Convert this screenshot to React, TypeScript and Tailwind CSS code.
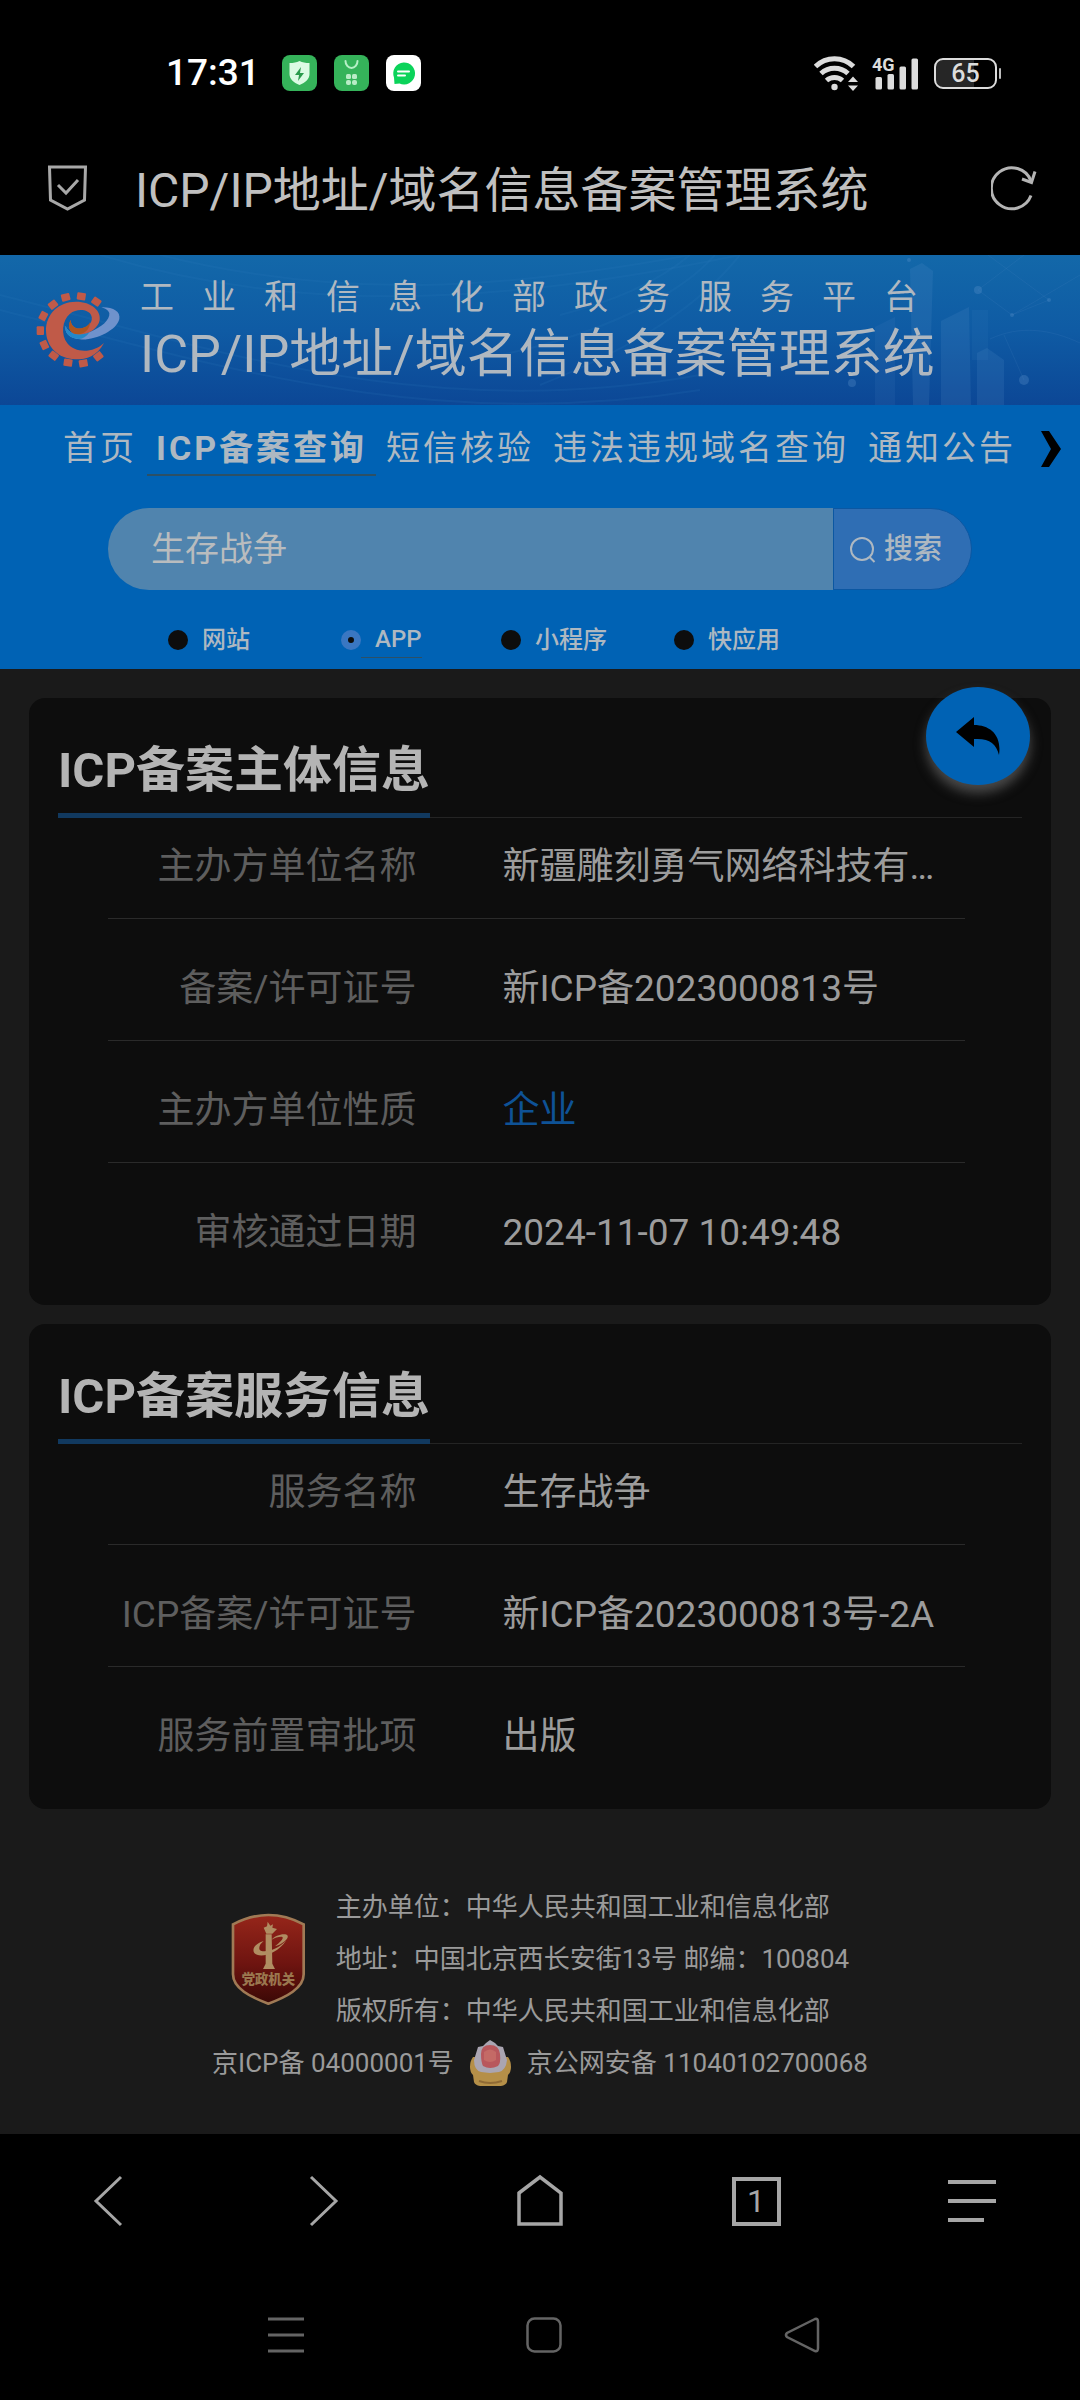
import React from 'react';

type Row = { label: string; value: string; highlight?: boolean };

const tabs = [
  { text: '首页' },
  { text: 'ICP备案查询', active: true },
  { text: '短信核验' },
  { text: '违法违规域名查询' },
  { text: '通知公告' },
];

const serviceTypes = ['网站', 'APP', '小程序', '快应用'];

const subjectRows: Row[] = [
  { label: '主办方单位名称', value: '新疆雕刻勇气网络科技有…' },
  { label: '备案/许可证号', value: '新ICP备2023000813号' },
  { label: '主办方单位性质', value: '企业', highlight: true },
  { label: '审核通过日期', value: '2024-11-07 10:49:48' },
];

const serviceRows: Row[] = [
  { label: '服务名称', value: '生存战争' },
  { label: 'ICP备案/许可证号', value: '新ICP备2023000813号-2A' },
  { label: '服务前置审批项', value: '出版' },
];

const StatusBar = () => (
  <div className="flex h-[146px] items-center justify-between pl-[166px] pr-[79px]">
    <div className="flex items-center">
      <span className="w-[116px] text-[37px] font-medium leading-[44px] text-white">17:31</span>
      <div className="flex items-center gap-[17px]">
        <svg width="35" height="36" viewBox="0 0 35 36">
          <rect width="35" height="36" rx="8" fill="#35b35a" />
          <path d="M17.500 6c3 1.500 6 2 10 2v11c0 5-4 8.500-10 11-6-2.500-10-6-10-11V8c4 0 7-.5 10-2z" fill="#dcfbe4" />
          <path d="M19 12l-6 8h4l-1 6 6-8h-4z" fill="#2a9a4c" />
        </svg>
        <svg width="35" height="36" viewBox="0 0 35 36">
          <rect width="35" height="36" rx="8" fill="#35b35a" />
          <path d="M11.500 6a6 7 0 0012 0" fill="none" stroke="#b6f0c6" strokeWidth="2" strokeLinecap="round" />
          <g fill="#b9ecc6">
            <rect x="12" y="19" width="5" height="5" rx="1.500" />
            <rect x="18" y="19" width="5" height="5" rx="1.500" />
            <rect x="12" y="25" width="5" height="5" rx="2" />
            <rect x="18" y="25" width="5" height="5" rx="2" />
          </g>
        </svg>
        <svg width="35" height="36" viewBox="0 0 35 36">
          <rect width="35" height="36" rx="8" fill="#fff" />
          <path d="M17.500 7.500a11 11 0 11-4 21l-5 .500-.5-6.500A11 11 0 0117.500 7.500z" fill="#0bd35a" />
          <path d="M12 16.500h11M12 20.500h7" stroke="#fff" strokeWidth="2" strokeLinecap="round" />
        </svg>
      </div>
    </div>
    <div className="flex items-center text-[#dcdcdc]">
      <svg width="44" height="36" viewBox="0 0 44 36" className="mr-[14px]" fill="none" stroke="currentColor">
        <path d="M1.500 11.500a27 27 0 0138 0" strokeWidth="5" />
        <path d="M7 18.500a20 20 0 0127 0" strokeWidth="5" />
        <path d="M12.500 25.500a12 12 0 0116 0" strokeWidth="5" />
        <circle cx="20.500" cy="32" r="3.200" fill="currentColor" stroke="none" />
        <path d="M39 21.500l5 5.500H34zM39 36l-5-5.500h10z" fill="currentColor" stroke="none" />
      </svg>
      <div className="relative mr-[15px] h-[34px] w-[47px]">
        <span className="absolute left-0 top-0 text-[18px] font-bold leading-[18px]">4G</span>
        <svg width="47" height="34" viewBox="0 0 47 34" fill="currentColor">
          <rect x="3.500" y="21" width="6.500" height="12.500" rx="1.500" />
          <rect x="15.500" y="18" width="6.500" height="15.500" rx="1.500" />
          <rect x="27.500" y="10.500" width="6.500" height="23" rx="1.500" />
          <rect x="39.500" y="2.500" width="6.500" height="31" rx="1.500" />
        </svg>
      </div>
      <div className="flex h-[31px] w-[63px] items-center justify-center rounded-[9px] border-2 border-[#dcdcdc] bg-linear-to-r from-[#262626] from-65% to-black to-65% text-[25px] font-medium leading-[27px]">
        65
      </div>
      <span className="ml-[2px] h-[11px] w-[2px] rounded-sm bg-[#bdbdbd]" />
    </div>
  </div>
);

const TitleBar = () => (
  <div className="mb-[25px] flex h-[84px] items-center pl-[47px] pr-[43px] text-[#c0c0c0]">
    <svg width="41" height="46" viewBox="0 0 41 46" fill="none" stroke="#a8a8a8" strokeWidth="3">
      <path d="M2.500 2h36l-1 33-17 9-17-9z" />
      <path d="M11 20l8 8 12-13" />
    </svg>
    <span className="flex-1 whitespace-nowrap pl-[47px] pt-[5px] text-[48px] leading-[60px]">
      ICP/IP地址/域名信息备案管理系统
    </span>
    <button aria-label="刷新">
      <svg width="46" height="46" viewBox="0 0 46 46" fill="none" stroke="#b4b4b4" strokeWidth="3">
        <path d="M40 30.500A20.500 20.500 0 1140 16" />
        <path d="M31 14l9.500 3.500L44 6.500" />
      </svg>
    </button>
  </div>
);

const Logo = () => (
  <svg width="100" height="90" viewBox="0 0 300 270">
    <path
      d="M107 122C112 145 145 155 178 142C215 127 240 105 238 85C236 76 225 70 214 67C250 66 272 80 268 102C260 138 190 168 150 163C118 160 102 142 107 122Z"
      fill="#6f92cc"
    />
    <path d="M107 122C112 145 145 155 178 142C170 154 158 163 146 162C118 160 102 142 107 122Z" fill="#2488c8" />
    <g fill="#c05a48">
      <rect x="-13" y="-11" width="26" height="22" rx="3" transform="translate(107 37) rotate(-14)" />
      <rect x="-13" y="-11" width="26" height="22" rx="3" transform="translate(154 34) rotate(8)" />
      <rect x="-13" y="-11" width="26" height="22" rx="3" transform="translate(199 50) rotate(35)" />
      <rect x="-13" y="-11" width="26" height="22" rx="3" transform="translate(69 59) rotate(-38)" />
      <rect x="-13" y="-11" width="26" height="22" rx="3" transform="translate(40 93) rotate(-62)" />
      <rect x="-13" y="-11" width="26" height="22" rx="3" transform="translate(31 137) rotate(-90)" />
      <rect x="-13" y="-11" width="26" height="22" rx="3" transform="translate(43 180) rotate(65)" />
      <rect x="-13" y="-11" width="26" height="22" rx="3" transform="translate(71 212) rotate(38)" />
      <rect x="-13" y="-11" width="26" height="22" rx="3" transform="translate(114 233) rotate(8)" />
      <rect x="-13" y="-11" width="26" height="22" rx="3" transform="translate(160 235) rotate(-10)" />
      <rect x="-13" y="-11" width="26" height="22" rx="3" transform="translate(205 214) rotate(-38)" />
      <path d="M222 174C200 216 165 224 135 223C85 222 48 185 48 136C48 88 85 50 138 50C185 50 214 78 209 105C205 130 175 150 145 148C122 147 110 130 122 104C122 124 138 134 155 130C178 125 190 108 184 92C176 72 140 70 120 86C96 105 92 150 112 175C135 205 190 205 222 174Z" />
    </g>
    <path d="M122 104C122 124 138 134 155 130C168 127 176 120 180 112C180 135 160 148 145 148C122 147 110 130 122 104Z" fill="#b0561f" />
  </svg>
);

const Banner = () => (
  <header className="relative flex h-[150px] overflow-hidden bg-linear-to-b from-[#1368a9] via-[#0f5ba4] to-[#0c4796] pl-[30px] text-[#b0b8c0]">
    <svg className="absolute inset-0 h-full w-full" viewBox="0 0 1080 150" preserveAspectRatio="xMaxYMid slice" fill="none">
      <g stroke="#2f7cc0" strokeOpacity=".14" strokeWidth="2">
        <path d="M0 40C200 90 420 170 700 120" />
        <path d="M0 55C200 105 420 180 700 135" />
        <path d="M100 0C300 60 500 50 740 0" />
        <path d="M160 0C340 45 500 35 690 0" />
        <path d="M540 130C640 90 700 50 740 0" />
        <path d="M560 60C620 45 660 25 690 0" />
        <path d="M500 100C600 80 680 40 715 0" />
      </g>
      <g fill="#5f95cc" fillOpacity=".16">
        <path d="M910 14l12-6 11 8-4 134h-16z" />
        <path d="M941 66l28-14 2 98h-30z" />
        <path d="M977 98l10-5 17 12v45h-27z" />
        <path d="M875 72l20-10v88h-20z" fillOpacity=".1" />
        <path d="M972 55h16v50h-16z" fillOpacity=".08" />
      </g>
      <g fill="#5f95cc" fillOpacity=".3">
        <circle cx="978" cy="35" r="4" />
        <circle cx="1024" cy="125" r="5" />
        <circle cx="852" cy="128" r="4" />
        <circle cx="1049" cy="45" r="2" />
        <circle cx="1012" cy="60" r="2" />
        <circle cx="909" cy="5" r="2" />
      </g>
      <path
        d="M978 35l46-35M1012 60l37-15M978 35l34 25 68-40M990 84c30-14 60-10 90 4M988 0l61 45M1004 80l20 45"
        stroke="#5f95cc"
        strokeOpacity=".12"
      />
    </svg>
    <div className="relative pt-[30px]">
      <Logo />
    </div>
    <div className="relative whitespace-nowrap pl-[10px] pt-[21px]">
      <p className="text-[34px] leading-[42px] tracking-[28px]">工业和信息化部政务服务平台</p>
      <h1 className="text-[52px] leading-[74px]">ICP/IP地址/域名信息备案管理系统</h1>
    </div>
  </header>
);

const TabNav = () => (
  <nav className="flex h-[86px] items-start gap-px overflow-hidden whitespace-nowrap pl-[54px] pr-[18px] pt-[19px] text-[34px] leading-[48px] tracking-[3px]">
    {tabs.map((tab) => (
      <a
        key={tab.text}
        href="#"
        className={tab.active ? 'border-b-2 border-[#2c5066] px-[9px] pb-[2px] font-bold' : 'px-[9px]'}
      >
        {tab.text}
      </a>
    ))}
    <button aria-label="更多" className="ml-auto mt-[7px]">
      <svg width="22" height="36" viewBox="0 0 22 36">
        <path d="M1 0h8l12 18L9 36H1l10-18z" fill="#000" />
      </svg>
    </button>
  </nav>
);

const SearchForm = () => (
  <form className="pb-[11px] pt-[17px]" onSubmit={(e) => e.preventDefault()}>
    <div className="ml-[10%] mr-[108px] flex h-[82px] items-stretch">
      <input
        aria-label="备案查询"
        defaultValue="生存战争"
        className="min-w-0 flex-1 rounded-l-full bg-[#5084ae] pl-[43px] text-[34px] text-[#b9bcbe] outline-none"
      />
      <button className="flex w-[139px] items-center gap-[8px] rounded-r-full border border-[#0b57a2] bg-[#2f6eb4] pl-[16px] pt-[2px] text-[29px] font-medium">
        <svg width="26" height="26" viewBox="0 0 26 26" fill="none" stroke="currentColor" strokeWidth="2">
          <circle cx="12" cy="12" r="11" />
          <path d="M19.500 20l5 5" />
        </svg>
        搜索
      </button>
    </div>
    <div className="mt-[31px] grid grid-cols-[173px_160px_173px_auto] pl-[168px] text-[24px] font-medium leading-[36px]">
      {serviceTypes.map((name) => (
        <label key={name} className="flex items-center">
          <input
            type="radio"
            name="serviceType"
            defaultChecked={name === 'APP'}
            className="size-[20px] appearance-none rounded-full bg-[#0d0d0d] checked:border-[7px] checked:border-[#3a77c2]"
          />
          <span className={name === 'APP' ? 'border-b border-[#2c5066] pl-[14px]' : 'pl-[14px]'}>{name}</span>
        </label>
      ))}
    </div>
  </form>
);

const InfoCard = ({ title, rows }: { title: string; rows: Row[] }) => (
  <section className="rounded-[16px] bg-[#0d0d0d] px-[29px] pb-[21px] pt-[37px]">
    <div className="flex border-b border-[#242424]">
      <h2 className="-mb-px border-b-[5px] border-[#11395f] pb-[6px] text-[49px] font-bold leading-[72px] text-[#b4b4b4]">
        {title}
      </h2>
    </div>
    <dl className="ml-[50px] mr-[57px] text-[37px] leading-[52px]">
      {rows.map((row) => (
        <div
          key={row.label}
          className="grid grid-cols-[36%_1fr] gap-[86px] border-b border-[#2a2a2a] pb-[25px] pt-[44px] first:pt-[23px] last:border-b-0"
        >
          <dt className="whitespace-nowrap text-right text-[#5e5e5e]">{row.label}</dt>
          <dd className={row.highlight ? 'whitespace-nowrap text-[#0e5296]' : 'whitespace-nowrap text-[#9c9c9c]'}>
            {row.value}
          </dd>
        </div>
      ))}
    </dl>
  </section>
);

const AgencyBadge = () => (
  <svg width="75" height="93" viewBox="0 0 225 279">
    <defs>
      <linearGradient id="badge" x1="0" y1="0" x2="0" y2="1">
        <stop offset="0" stopColor="#96261a" />
        <stop offset=".55" stopColor="#6e1410" />
        <stop offset="1" stopColor="#3a0806" />
      </linearGradient>
    </defs>
    <path
      d="M6 34C40 16 76 6 112 6s72 10 106 28v150c0 42-52 68-106 88C58 252 6 226 6 184z"
      fill="url(#badge)"
      stroke="#a07a55"
      strokeWidth="8"
    />
    <g fill="#b08d62">
      <path d="M104 64h18l2 88 8 16H96l8-16zM98 44l10-4 2-14 8 12 8-4-2 10 14 4-14 14h-18z" />
      <path d="M98 84c-26 8-36 24-28 36 12 16 66 8 96-38-26 30-72 40-80 28-4-8 2-18 12-26z" />
      <path d="M122 80c10-14 42-22 48-12 4 10-18 26-38 32 12-10 28-24 22-28-6-2-22 2-32 8z" />
    </g>
    <text x="112" y="214" textAnchor="middle" fontSize="40" fontWeight="900" fill="#9a774f">
      党政机关
    </text>
  </svg>
);

const PoliceBadge = () => (
  <svg width="43" height="46" viewBox="0 0 43 46">
    <path d="M4 17q-3 4-3 10 0 5 3 8l1 7q1 3 6 4h21q5-1 6-4l1-7q3-3 3-8 0-6-3-10z" fill="#b58f48" />
    <path d="M9 7l5-1 3-3 4-3 5 3 3 3 5 1 4 13q-1 10-8 12l-9 1-9-1Q5 30 5 20z" fill="#aaa5b2" />
    <path d="M12 14q0-9 9-9t10 9-2 12q-8 4-15 0-2-4-2-12z" fill="#b8575c" />
    <path d="M15 12q6-5 12 0v8q-6 4-12 0z" fill="#c46a66" />
    <path d="M10 41q11 4 23 0" stroke="#8f6a35" strokeWidth="2" fill="none" />
  </svg>
);

const SiteFooter = () => (
  <footer className="flex flex-col items-center pb-[45px] pt-[72px] text-[26px] leading-[52px] text-[#9a9a9a]">
    <div className="flex items-center gap-[30px] whitespace-nowrap">
      <AgencyBadge />
      <div>
        <p>主办单位：中华人民共和国工业和信息化部</p>
        <p>地址：中国北京西长安街13号 邮编：100804</p>
        <p>版权所有：中华人民共和国工业和信息化部</p>
      </div>
    </div>
    <div className="flex items-center gap-[15px] whitespace-nowrap">
      <a href="#">京ICP备 04000001号</a>
      <PoliceBadge />
      <a href="#">京公网安备 11040102700068</a>
    </div>
  </footer>
);

const BrowserBar = () => (
  <div className="grid h-[134px] grid-cols-5 place-items-center text-[#a6a6a6]">
    <button aria-label="后退">
      <svg width="50" height="54" viewBox="0 0 50 54" fill="none" stroke="currentColor" strokeWidth="3">
        <path d="M38 3L13 27l25 24" />
      </svg>
    </button>
    <button aria-label="前进">
      <svg width="50" height="54" viewBox="0 0 50 54" fill="none" stroke="currentColor" strokeWidth="3">
        <path d="M12 3l25 24-25 24" />
      </svg>
    </button>
    <button aria-label="主页">
      <svg width="50" height="54" viewBox="0 0 50 54" fill="none" stroke="currentColor" strokeWidth="3.500">
        <path d="M4 19L25 3l21 16v31H4z" />
      </svg>
    </button>
    <button className="flex size-[49px] items-center justify-center border-[4px] border-[#a6a6a6] text-[32px] leading-[40px]">
      1
    </button>
    <button aria-label="菜单">
      <svg width="50" height="54" viewBox="0 0 50 54" fill="none" stroke="currentColor" strokeWidth="4">
        <path d="M1 8h48M1 27h48M1 46h36" />
      </svg>
    </button>
  </div>
);

const SystemBar = () => (
  <div className="flex h-[133px] items-center justify-center gap-[222px] pl-[8px] text-[#646464]">
    <button aria-label="最近任务">
      <svg width="36" height="36" viewBox="0 0 36 36" fill="none" stroke="currentColor" strokeWidth="3">
        <path d="M0 2h36M0 18h36M0 34h36" />
      </svg>
    </button>
    <button aria-label="桌面">
      <svg width="36" height="36" viewBox="0 0 36 36" fill="none" stroke="currentColor" strokeWidth="2.500">
        <rect x="1.500" y="1.500" width="33" height="33" rx="7" />
      </svg>
    </button>
    <button aria-label="返回">
      <svg width="36" height="36" viewBox="0 0 36 36" fill="none" stroke="currentColor" strokeWidth="2.500">
        <path d="M31 2L3 16q-2 2 0 4l28 14q3 1 3-3V5q0-4-3-3z" />
      </svg>
    </button>
  </div>
);

const App = () => {
  return (
    <div className="min-h-screen bg-black font-[Roboto,'Noto_Sans_CJK_SC',sans-serif]">
      <StatusBar />
      <TitleBar />
      <Banner />
      <div className="bg-[#0062b4] text-[#aeb8c1]">
        <TabNav />
        <SearchForm />
      </div>

      <main className="relative bg-[#1a1a1a] pt-[29px]">
        <div className="flex flex-col gap-[19px] px-[29px]">
          <InfoCard title="ICP备案主体信息" rows={subjectRows} />
          <InfoCard title="ICP备案服务信息" rows={serviceRows} />
        </div>
        {/* Floating back button */}
        <button
          aria-label="返回上一页"
          className="absolute right-[50px] top-[18px] flex h-[98px] w-[104px] items-center justify-center rounded-[50%] bg-[#0062b4] shadow-[0_8px_12px_#4a4a4a]"
        >
          <svg width="44" height="38" viewBox="0 0 44 38">
            <path d="M0 15L18 0v8c16 0 28 10 25 30-3-12-10-17-25-16v8z" fill="#000" />
          </svg>
        </button>
        <SiteFooter />
      </main>

      <BrowserBar />
      <SystemBar />
    </div>
  );
};

export default App;
